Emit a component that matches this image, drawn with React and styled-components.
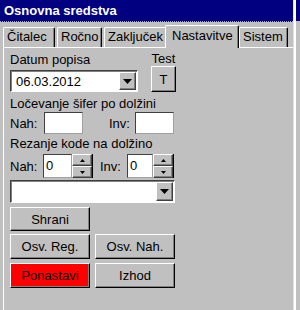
import React from 'react'
import styled, { createGlobalStyle } from 'styled-components'

const Global = createGlobalStyle`
  body {
    margin: 0;
    background: #c0c0c0;
    font-family: "Liberation Sans", Arial, sans-serif;
    font-size: 13px;
    color: #000;
  }
`

const tabs = [
  { label: 'Čitalec', width: 52 },
  { label: 'Ročno', width: 45 },
  { label: 'Zaključek', width: 63 },
  { label: 'Nastavitve', width: 74, active: true },
  { label: 'Sistem', width: 49 },
]

function DropArrow() {
  return (
    <svg width="9" height="5" viewBox="0 0 9 5">
      <polygon points="0,0 9,0 4.5,5" fill="#000" />
    </svg>
  )
}

function Spin() {
  return (
    <SpinButtons>
      <SpinBtn>
        <svg width="5" height="3" viewBox="0 0 5 3"><polygon points="2.5,0 5,3 0,3" fill="#000" /></svg>
      </SpinBtn>
      <SpinBtn>
        <svg width="5" height="3" viewBox="0 0 5 3"><polygon points="0,0 5,0 2.5,3" fill="#000" /></svg>
      </SpinBtn>
    </SpinButtons>
  )
}

function App() {
  return (
    <Window>
      <Global />
      <Main>
        <TitleBar>Osnovna sredstva</TitleBar>
        <TabStrip>
          {tabs.map(t => (
            <Tab key={t.label} $w={t.width} $active={t.active}>{t.label}</Tab>
          ))}
        </TabStrip>
        <Panel>
          <TopRow>
            <Col>
              <Label>Datum popisa</Label>
              <Combo $w={128} $h={22}>
                <ComboText>06.03.2012</ComboText>
                <DropBtn><DropArrow /></DropBtn>
              </Combo>
            </Col>
            <Col $narrow>
              <Label $center>Test</Label>
              <Button $w={25} $h={26}>T</Button>
            </Col>
          </TopRow>

          <Label $mt={4}>Ločevanje šifer po dolžini</Label>
          <FieldRow $mt={1}>
            <FieldLabel $w={34}>Nah:</FieldLabel>
            <TextBox $w={39} $h={22} />
            <FieldLabel $w={26} $ml={26}>Inv:</FieldLabel>
            <TextBox $w={39} $h={22} />
          </FieldRow>

          <Label $mt={2}>Rezanje kode na dolžino</Label>
          <FieldRow $mt={3}>
            <FieldLabel $w={33}>Nah:</FieldLabel>
            <TextBox $w={29} $h={24}>0</TextBox>
            <Spin />
            <FieldLabel $w={27} $ml={7}>Inv:</FieldLabel>
            <TextBox $w={26} $h={24}>0</TextBox>
            <Spin />
          </FieldRow>

          <Combo $w={165} $h={23} $mt={2}>
            <ComboText />
            <DropBtn><DropArrow /></DropBtn>
          </Combo>

          <ButtonRow $mt={4}>
            <Button $w={80} $h={24}>Shrani</Button>
          </ButtonRow>
          <ButtonRow $mt={3}>
            <Button $w={80} $h={25}>Osv. Reg.</Button>
            <Button $w={80} $h={25}>Osv. Nah.</Button>
          </ButtonRow>
          <ButtonRow $mt={4}>
            <Button $w={80} $h={25} $red>Ponastavi</Button>
            <Button $w={80} $h={25}>Izhod</Button>
          </ButtonRow>
        </Panel>
      </Main>
      <Divider />
      <RightStrip>
        <RightTitle />
      </RightStrip>
    </Window>
  )
}

export default App

const Window = styled.div`
  display: flex;
  width: 300px;
  height: 310px;
  overflow: hidden;
`

const Main = styled.div`
  width: 293px;
  display: flex;
  flex-direction: column;
`

const TitleBar = styled.div`
  height: 22px;
  background: #000080;
  color: #fff;
  font-weight: bold;
  font-size: 13px;
  line-height: 22px;
  padding-left: 4px;
  border-bottom: 1px dotted #a8a8c8;
  box-sizing: border-box;
  white-space: nowrap;
`

const TabStrip = styled.div`
  display: flex;
  align-items: flex-end;
  gap: 2px;
  height: 24px;
  padding-left: 3px;
  margin-top: 1px;
  position: relative;
  z-index: 2;
`

const Tab = styled.div`
  width: ${p => p.$w}px;
  height: ${p => (p.$active ? 23 : 20)}px;
  margin: ${p => (p.$active ? '0 -2px -1px -4px' : '0')};
  padding: ${p => (p.$active ? '2px 0 0 6px' : '1px 0 0 3px')};
  box-sizing: border-box;
  background: #c0c0c0;
  border-top: 1px solid #fff;
  border-left: 1px solid #fff;
  border-right: 1px solid #000;
  box-shadow: inset -1px 0 #808080;
  border-radius: 2px 2px 0 0;
  line-height: 16px;
  white-space: nowrap;
  overflow: hidden;
  position: relative;
  z-index: ${p => (p.$active ? 2 : 1)};
`

const Panel = styled.div`
  flex: 1;
  margin-left: 3px;
  border-top: 1px solid #fff;
  border-left: 1px solid #fff;
  padding: 3px 0 0 6px;
  display: flex;
  flex-direction: column;
  align-items: flex-start;
`

const TopRow = styled.div`
  display: flex;
  align-items: flex-end;
  gap: 13px;
`

const Col = styled.div`
  display: flex;
  flex-direction: column;
  align-items: ${p => (p.$narrow ? 'center' : 'flex-start')};
  gap: ${p => (p.$narrow ? 0 : 3)}px;
`

const Label = styled.div`
  line-height: 15px;
  margin-top: ${p => p.$mt || 0}px;
  white-space: nowrap;
`

const FieldRow = styled.div`
  display: flex;
  align-items: center;
  margin-top: ${p => p.$mt || 0}px;
`

const FieldLabel = styled.div`
  width: ${p => p.$w}px;
  margin-left: ${p => p.$ml || 0}px;
`

const TextBox = styled.div`
  width: ${p => p.$w}px;
  height: ${p => p.$h}px;
  box-sizing: border-box;
  background: #fff;
  border: 1px solid;
  border-color: #404040 #a0a0a0 #a0a0a0 #404040;
  padding: 3px 0 0 2px;
  line-height: 16px;
`

const Combo = styled.div`
  width: ${p => p.$w}px;
  height: ${p => p.$h}px;
  margin-top: ${p => p.$mt || 0}px;
  box-sizing: border-box;
  background: #fff;
  border: 1px solid;
  border-color: #404040 #fff #fff #404040;
  box-shadow: 1px 1px 0 #808080 inset;
  display: flex;
  align-items: stretch;
  padding: 1px;
`

const ComboText = styled.div`
  flex: 1;
  padding: 2px 0 0 4px;
  line-height: 16px;
`

const DropBtn = styled.div`
  width: 17px;
  background: #c0c0c0;
  box-sizing: border-box;
  border: 1px solid;
  border-color: #fff #404040 #404040 #fff;
  box-shadow: inset -1px -1px #808080;
  display: flex;
  align-items: center;
  justify-content: center;
`

const SpinButtons = styled.div`
  display: flex;
  flex-direction: column;
  width: 21px;
  height: 24px;
  border-right: 1px solid #000;
  box-sizing: border-box;
`

const SpinBtn = styled.div`
  flex: 1;
  background: #c0c0c0;
  box-sizing: border-box;
  border: 1px solid;
  border-color: #fff #404040 #404040 #fff;
  box-shadow: inset -1px -1px #808080;
  display: flex;
  align-items: center;
  justify-content: center;
`

const ButtonRow = styled.div`
  display: flex;
  gap: 5px;
  margin-top: ${p => p.$mt || 0}px;
`

const Button = styled.div`
  width: ${p => p.$w}px;
  height: ${p => p.$h}px;
  box-sizing: border-box;
  background: ${p => (p.$red ? '#ff0000' : '#c0c0c0')};
  border: 1px solid;
  border-color: #fff #000 #000 #fff;
  box-shadow: inset -1px -1px #808080;
  display: flex;
  align-items: center;
  justify-content: center;
  white-space: nowrap;
  color: #000;
`

const Divider = styled.div`
  width: 2px;
  background: #fff;
  border-left: 1px solid #e0e0e0;
`

const RightStrip = styled.div`
  flex: 1;
  background: #c0c0c0;
`

const RightTitle = styled.div`
  height: 21px;
  background: #000080;
`
